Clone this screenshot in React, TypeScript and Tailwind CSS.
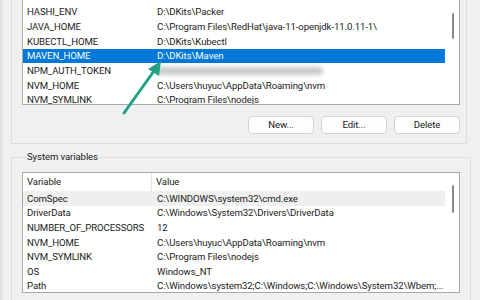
const userVars: [string, string][] = [
  ['HASHI_ENV', 'D:\\DKits\\Packer'],
  ['JAVA_HOME', 'C:\\Program Files\\RedHat\\java-11-openjdk-11.0.11-1\\'],
  ['KUBECTL_HOME', 'D:\\DKits\\Kubectl'],
  ['MAVEN_HOME', 'D:\\DKits\\Maven'],
  ['NPM_AUTH_TOKEN', ''],
  ['NVM_HOME', 'C:\\Users\\huyuc\\AppData\\Roaming\\nvm'],
  ['NVM_SYMLINK', 'C:\\Program Files\\nodejs'],
];

const systemVars: [string, string][] = [
  ['ComSpec', 'C:\\WINDOWS\\system32\\cmd.exe'],
  ['DriverData', 'C:\\Windows\\System32\\Drivers\\DriverData'],
  ['NUMBER_OF_PROCESSORS', '12'],
  ['NVM_HOME', 'C:\\Users\\huyuc\\AppData\\Roaming\\nvm'],
  ['NVM_SYMLINK', 'C:\\Program Files\\nodejs'],
  ['OS', 'Windows_NT'],
  ['Path', 'C:\\Windows\\system32;C:\\Windows;C:\\Windows\\System32\\Wbem;...'],
];

function Row({ name, value, selected, hover }: { name: string; value: string; selected?: boolean; hover?: boolean }) {
  return (
    <div
      className={`flex h-[14.67px] w-[422px] items-center whitespace-nowrap ${
        selected ? 'bg-[#0078d7] text-white' : hover ? 'bg-[#efefef] text-[#1b1b1b]' : 'text-[#1b1b1b]'
      }`}
    >
      <span className="w-[134px] shrink-0 pl-[4px]">{name}</span>
      {value ? (
        <span>{value}</span>
      ) : (
        // blurred secret
        <span className="h-[8px] w-[166px] rounded-full bg-[#cacaca] blur-[2px]" />
      )}
    </div>
  );
}

function Thumb({ top, height }: { top: number; height: number }) {
  return (
    <div
      className="absolute left-[429px] w-[2px] rounded-full bg-[#8a8a8a]"
      style={{ top, height }}
    />
  );
}

export default function App() {
  return (
    <div className="relative h-[300px] w-[480px] overflow-hidden border-l-[3px] border-l-[#e3e3e3] bg-[#f0f0f0] font-['Roboto',sans-serif] text-[9.6px] leading-none tracking-[-0.1px]">
      {/* User variables group */}
      <div className="-mt-[12px] ml-[8px] h-[156px] w-[456px] border border-[#dcdcdc] pl-[10px] pt-[4px]">
        <div className="relative h-[112px] w-[438px] overflow-hidden border border-[#a9a9a9] bg-white pt-[10.7px]">
          {userVars.map(([n, v]) => (
            <Row key={n} name={n} value={v} selected={n === 'MAVEN_HOME'} />
          ))}
          <Thumb top={19} height={26} />
        </div>
        <div className="mt-[11px] flex w-[438px] justify-end gap-[7px]">
          {['New...', 'Edit...', 'Delete'].map((b) => (
            <button
              key={b}
              className="flex h-[18px] w-[66px] items-center justify-center rounded-[4px] border border-[#d3d3d3] bg-[#fdfdfd] text-[#1a1a1a]"
            >
              {b}
            </button>
          ))}
        </div>
      </div>

      {/* System variables group */}
      <fieldset className="ml-[8px] mt-[5px] h-[200px] w-[456px] border border-[#dcdcdc] px-[10px]">
        <legend className="ml-[4px] px-[1px] leading-[16px] text-[#1a1a1a]">System variables</legend>
        <div className="relative mt-[7px] h-[121px] w-[438px] overflow-hidden border border-[#a9a9a9] bg-white">
          <div className="flex h-[18px] items-center text-[#1a1a1a]">
            <span className="flex h-full w-[129px] items-center border-r border-[#e5e5e5] pl-[4px]">Variable</span>
            <span className="pl-[4px]">Value</span>
          </div>
          {systemVars.map(([n, v]) => (
            <Row key={n} name={n} value={v} hover={n === 'ComSpec'} />
          ))}
          <Thumb top={12} height={28} />
        </div>
      </fieldset>

      {/* annotation arrow */}
      <svg className="pointer-events-none absolute left-0 top-0" width="480" height="300" viewBox="0 0 480 300">
        <line x1="121" y1="113" x2="151" y2="71" stroke="#22a085" strokeWidth="3" strokeLinecap="round" />
        <polygon points="158,61 156,76 145,69" fill="#22a085" />
      </svg>
    </div>
  );
}
